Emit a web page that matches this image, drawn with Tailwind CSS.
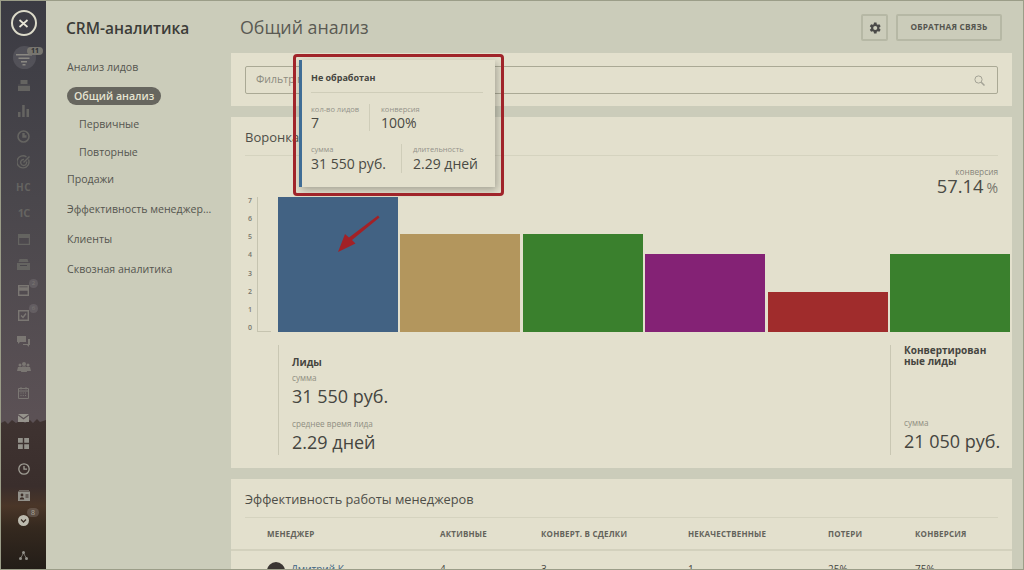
<!DOCTYPE html>
<html lang="ru">
<head>
<meta charset="utf-8">
<script src="https://cdn.jsdelivr.net/npm/@tailwindcss/browser@4"></script>
<title>CRM-аналитика</title>
</head>
<body class="m-0 overflow-hidden">
<div class="relative flex h-[570px] w-[1024px] overflow-hidden border border-[#9b9d88] bg-[#cbccba] font-['Open_Sans','Noto_Sans',sans-serif] text-[#454540]">

  <!-- icon rail -->
  <aside class="relative flex h-full w-[45px] shrink-0 flex-col items-center overflow-hidden bg-[linear-gradient(180deg,#3b3b43_0%,#4a474c_35%,#5b5155_73%,#5d4f51_100%)]">
    <svg class="absolute bottom-0 left-0" width="45" height="152" viewBox="0 0 45 152" preserveAspectRatio="none">
      <defs><linearGradient id="g" x1="0" y1="0" x2="0" y2="1"><stop offset="0" stop-color="#3f3331"/><stop offset=".45" stop-color="#3a2e2c"/><stop offset=".58" stop-color="#4a3628"/><stop offset=".72" stop-color="#35291f"/><stop offset="1" stop-color="#231d18"/></linearGradient></defs>
      <path d="M0 6l4-2 3 3 4-4 4 3 5-3 4 3 5-3 3 3 4-4 3 3 6-2V152H0z" fill="url(#g)"/>
    </svg>
    <div class="relative mt-[9px] flex h-[26px] w-[26px] items-center justify-center rounded-full border-2 border-[#dcdac9]">
      <svg width="11" height="11" viewBox="0 0 11 11" fill="none" stroke="#e8e6d6" stroke-width="1.7"><path d="M1.5 2l8 7M9.5 2l-8 7"/></svg>
    </div>
    <div class="relative mt-[11.2px] flex w-full flex-col items-center text-[#656461]">
      <div class="relative flex h-[25.6px] w-full items-center justify-center">
        <span class="absolute left-[12px] top-[-1px] h-[23px] w-[23px] rounded-full bg-white/10"></span>
        <svg class="relative" width="16" height="12" viewBox="0 0 16 12" fill="#8a8882"><path d="M0 0h16v1.600H0zM2.500 3.500h11v1.600h-11zM5 7h6v1.600H5zM6.500 10h3v1.600h-3z"/></svg>
        <span class="absolute left-[26px] top-[0px] rounded-full bg-[#77756f] px-[4px] text-[7px] font-bold leading-[8px] text-[#2f2f33]">11</span>
      </div>
      <div class="flex h-[25.6px] items-center"><svg width="12" height="11" viewBox="0 0 12 11" fill="currentColor"><path d="M2.500 0h7v4h-7zM0 6h12v5H0z"/><path d="M0 4.800h12v.5H0z"/></svg></div>
      <div class="flex h-[25.6px] items-center"><svg width="11" height="12" viewBox="0 0 11 12" fill="currentColor"><path d="M0 7h2.500v5H0zM4.200 0h2.500v12H4.200zM8.500 4H11v8H8.500z"/></svg></div>
      <div class="flex h-[25.6px] items-center"><svg width="13" height="13" viewBox="0 0 13 13" fill="none" stroke="currentColor" stroke-width="1.600"><circle cx="6.500" cy="6.500" r="5.500"/><path d="M6.500 3v3.500H9.500" stroke-width="2.400"/></svg></div>
      <div class="flex h-[25.6px] items-center"><svg width="14" height="14" viewBox="0 0 14 14" fill="none" stroke="currentColor" stroke-width="1.400"><path d="M11.500 4.500a6 6 0 1 1-2-2.500"/><path d="M9.500 6.500a3 3 0 1 1-2.500-2"/><path d="M6.500 7.500l6-6"/></svg></div>
      <div class="flex h-[25.6px] items-center text-[10px] font-bold tracking-[.5px]">НС</div>
      <div class="flex h-[25.6px] items-center text-[11px] font-bold tracking-[-1px]">1С</div>
      <div class="flex h-[25.6px] items-center"><svg width="12" height="11" viewBox="0 0 12 11" fill="none" stroke="currentColor" stroke-width="1.200"><path d="M.6.600h10.800v9.800H.6z"/><path d="M0 1h12v2.500H0z" fill="currentColor"/></svg></div>
      <div class="flex h-[25.6px] items-center"><svg width="13" height="11" viewBox="0 0 13 11" fill="currentColor"><path d="M2.500 0h8l1 3h-10zM0 4h13v7H0z"/><path d="M3 6h7v1H3z" fill="#4a474c"/></svg></div>
      <div class="relative flex h-[25.6px] w-full items-center justify-center text-[#7b7773]"><svg width="11" height="11" viewBox="0 0 11 11" fill="none" stroke="currentColor" stroke-width="1.400"><path d="M.7.700h9.600v9.600H.7z"/><path d="M1 3h9v2H1z" fill="currentColor"/></svg><span class="absolute left-[28px] top-[1px] h-[9px] w-[9px] rounded-full bg-white/10 text-center text-[6px] leading-[9px]">2</span></div>
      <div class="relative flex h-[25.6px] w-full items-center justify-center text-[#7b7773]"><svg width="11" height="11" viewBox="0 0 11 11" fill="none" stroke="currentColor" stroke-width="1.400"><path d="M.7.700h9.600v9.600H.7z"/><path d="M3 5.500l2 2 3-4"/></svg><span class="absolute left-[28px] top-[1px] h-[9px] w-[9px] rounded-full bg-white/10 text-center text-[6px] leading-[9px]">6</span></div>
      <div class="flex h-[25.6px] items-center text-[#7b7773]"><svg width="13" height="11" viewBox="0 0 13 11" fill="currentColor"><path d="M0 0h9v6H3L1 8V6H0z"/><path d="M11 3h2v6h-1v2l-2-2H6V8h5z"/></svg></div>
      <div class="flex h-[25.6px] items-center text-[#7b7773]"><svg width="14" height="11" viewBox="0 0 14 11" fill="currentColor"><circle cx="3" cy="3" r="1.500"/><circle cx="7" cy="2" r="2"/><circle cx="11" cy="3" r="1.500"/><path d="M0 9l1-4h4l1 4zM4 10l1-5.500h4L10 10zM8 9l1-4h4l1 4z"/></svg></div>
      <div class="flex h-[25.6px] items-center text-[#7b7773]"><svg width="11" height="12" viewBox="0 0 11 12" fill="none" stroke="currentColor" stroke-width="1"><path d="M.5 1.500h10v10H.5zM.5 4h10M3 0v2.500M8 0v2.500"/><path d="M2.500 6h6M2.500 8.500h6" stroke-dasharray="1 1.250"/></svg></div>
      <div class="flex h-[25.6px] items-center text-[#96938c]"><svg width="11" height="8" viewBox="0 0 11 8" fill="currentColor"><path d="M0 0h11L5.500 4zM0 1.500l5.500 4 5.500-4V8H0z"/></svg></div>
      <div class="flex h-[25.6px] items-center text-[#93918a]"><svg width="11" height="11" viewBox="0 0 11 11" fill="currentColor"><path d="M0 0h4.800v4.800H0zM6.200 0H11v4.800H6.200zM0 6.200h4.800V11H0zM6.200 6.200H11V11H6.200z"/></svg></div>
      <div class="flex h-[25.6px] items-center text-[#a09e95]"><svg width="12" height="12" viewBox="0 0 12 12" fill="none" stroke="currentColor" stroke-width="1.300"><circle cx="6" cy="6" r="5.200"/><path d="M6 3v3.200h3"/></svg></div>
      <div class="flex h-[25.6px] items-center text-[#93918a]"><svg width="12" height="11" viewBox="0 0 12 11" fill="currentColor"><path d="M0 1.500h12V11H0z"/><path d="M1 0h10v.6H1z"/><circle cx="4" cy="5" r="1.400" fill="#3c2e28"/><path d="M1.800 9.500c0-3 4.400-3 4.400 0zM7.500 4.500H10.500v1H7.500zM7.500 6.500H10.500v1H7.500z" fill="#3c2e28"/></svg></div>
      <div class="relative flex h-[25.6px] w-full items-center justify-center"><svg width="11" height="11" viewBox="0 0 11 11"><circle cx="5.500" cy="5.500" r="5.500" fill="#bdbbaf"/><path d="M3 4.500l2.500 2.500L8 4.500" fill="none" stroke="#3a2e26" stroke-width="1.300"/></svg><span class="absolute left-[26px] top-[0px] h-[9px] w-[12px] rounded-full bg-white/15 text-center text-[7px] leading-[9px] text-[#aaa89e]">8</span></div>
    </div>
    <svg class="absolute bottom-[9px] left-[18px] text-[#93918a]" width="9" height="9" viewBox="0 0 9 9" fill="currentColor"><circle cx="4.500" cy="1.500" r="1.500"/><circle cx="1.500" cy="7.500" r="1.500"/><circle cx="7.500" cy="7.500" r="1.500"/><path d="M4.200 2L1.300 7l.6.300L4.800 2.300zM4.800 2l2.900 5-.6.300L4.200 2.300z"/></svg>
  </aside>

  <!-- section nav -->
  <nav class="w-[185px] shrink-0 pl-[20px] pr-2 text-[10.6px] text-[#55554f]">
    <h2 class="mt-[15px] h-[24px] text-[15.5px] font-semibold leading-[24px] text-[#3c3c38]">CRM-аналитика</h2>
    <ul class="mt-[17px] flex flex-col pl-[1px]">
      <li class="h-[30px] leading-[20px]">Анализ лидов</li>
      <li class="h-[28px]"><span class="inline-block h-[18px] rounded-full bg-[#67665f] px-[7px] font-semibold leading-[18px] text-[#e6e4d2]">Общий анализ</span></li>
      <li class="h-[28px] pl-[12px] leading-[18px]">Первичные</li>
      <li class="h-[27px] pl-[12px] leading-[18px]">Повторные</li>
      <li class="h-[30px] leading-[18px]">Продажи</li>
      <li class="h-[30px] w-[147px] truncate leading-[18px]">Эффективность менеджеров</li>
      <li class="h-[30px] leading-[18px]">Клиенты</li>
      <li class="h-[30px] leading-[18px]">Сквозная аналитика</li>
    </ul>
  </nav>

  <!-- main -->
  <main class="flex min-w-0 flex-1 flex-col pr-[11px]">
    <header class="flex h-[52px] items-start justify-between pl-[9px] pr-[10px]">
      <h1 class="mt-[13px] text-[17.8px] leading-[26px] text-[#5a5a53]">Общий анализ</h1>
      <div class="mt-[13px] flex gap-[8px]">
        <button class="flex h-[27px] w-[27px] items-center justify-center rounded-[2px] border-2 border-[#b6b8a5]">
          <svg width="14" height="14" viewBox="0 0 24 24" fill="#4a4a48"><path d="M19.400 13a7.500 7.500 0 0 0 0-2l2.300-1.800-2.200-3.800-2.700 1.100a7.500 7.500 0 0 0-1.800-1L14.600 2.600h-4.400L9.800 5.500a7.500 7.500 0 0 0-1.800 1L5.300 5.400 3.100 9.200 5.400 11a7.500 7.500 0 0 0 0 2l-2.300 1.800 2.200 3.800 2.700-1.100a7.500 7.500 0 0 0 1.800 1l.4 2.900h4.400l.4-2.900a7.500 7.500 0 0 0 1.800-1l2.700 1.100 2.200-3.800zM12.400 15.500a3.500 3.500 0 1 1 0-7 3.500 3.500 0 0 1 0 7z"/></svg>
        </button>
        <button class="h-[27px] w-[106px] rounded-[2px] border-2 border-[#b6b8a5] text-[8.3px] font-bold tracking-[.2px] text-[#55554f]">ОБРАТНАЯ СВЯЗЬ</button>
      </div>
    </header>

    <section class="h-[53px] shrink-0 bg-[#e3e0cd] px-[14px] pt-[13px]">
      <div class="flex h-[28px] items-center justify-between rounded-[2px] border border-[#aaa995] pl-[10px] pr-[12px] text-[10.5px] text-[#8c8b7f]">
        <span>Фильтр по</span>
        <svg width="11" height="11" viewBox="0 0 11 11" fill="none" stroke="#a3a295" stroke-width="1"><circle cx="4.500" cy="4.500" r="3.600"/><path d="M7.200 7.200l3.300 3.300" stroke-width="1.500"/></svg>
      </div>
    </section>

    <section class="mt-[11px] h-[351px] shrink-0 bg-[#e3e0cd] px-[14px]">
      <div class="h-[39px] border-b border-[#d5d3bf] pt-[10px] text-[13px] leading-[20px] text-[#4e4e48]">Воронка</div>
      <div class="h-[41px] pt-[11px] text-right leading-none">
        <div class="text-[8.3px] leading-[10px] text-[#86857a]">конверсия</div>
        <div class="-mt-[1px] text-[18.3px] leading-[20px] text-[#4a4a44]">57.14<span class="ml-[3px] text-[14px] text-[#77766c]">%</span></div>
      </div>
      <!-- chart -->
      <div class="-mr-[12px] flex h-[135px]">
        <div class="flex h-full w-[12px] flex-col justify-between pl-[3px] text-[7px] font-semibold leading-[8px] text-[#77766c]">
          <span>7</span><span>6</span><span>5</span><span>4</span><span>3</span><span>2</span><span>1</span><span>0</span>
        </div>
        <div class="h-full w-[14px] shrink-0 border-b border-l border-[#c6c4b0]"></div>
        <div class="ml-[7px] flex h-[135px] flex-1 items-end gap-[2.6px]">
          <div class="h-[135px] flex-1 bg-[#426283]"></div>
          <div class="h-[98px] flex-1 bg-[#b3965d]"></div>
          <div class="h-[98px] flex-1 bg-[#3a802d]"></div>
          <div class="h-[78px] flex-1 bg-[#842275]"></div>
          <div class="h-[40px] flex-1 bg-[#a02c2c]"></div>
          <div class="h-[78px] flex-1 bg-[#3a802d]"></div>
        </div>
      </div>
      <!-- totals -->
      <div class="mt-[13px] flex h-[110px] justify-between pl-[33px]">
        <div class="w-[200px] border-l border-[#c9c7b3] pl-[13px] pt-[10px]">
          <div class="text-[10px] font-bold leading-[14px] text-[#45453f]">Лиды</div>
          <div class="mt-[3px] text-[8.2px] leading-[12px] text-[#8f8e82]">сумма</div>
          <div class="text-[18px] leading-[24px] text-[#45453f]">31 550 руб.</div>
          <div class="mt-[10px] text-[8.2px] leading-[12px] text-[#8f8e82]">среднее время лида</div>
          <div class="text-[18px] leading-[24px] text-[#45453f]">2.29 дней</div>
        </div>
        <div class="w-[108px] border-l border-[#c9c7b3] pl-[13px] pt-0">
          <div class="whitespace-nowrap text-[10px] font-bold leading-[11px] text-[#45453f]">Конвертирован<br>ные лиды</div>
          <div class="mt-[50px] text-[8.2px] leading-[12px] text-[#8f8e82]">сумма</div>
          <div class="whitespace-nowrap text-[18px] leading-[24px] text-[#45453f]">21 050 руб.</div>
        </div>
      </div>
    </section>

    <section class="mt-[11px] flex-1 overflow-hidden bg-[#e3e0cd]">
      <div class="mx-[14px] h-[39px] border-b border-[#d5d3bf] pt-[10px] text-[12.8px] leading-[20px] text-[#4e4e48]">Эффективность работы менеджеров</div>
      <div class="grid h-[33px] grid-cols-[173px_101px_147px_140px_87px_1fr] items-center border-b-[2px] border-[#d3d1bd] pl-[36px] text-[8px] font-bold tracking-[.2px] text-[#64635b]">
        <span>МЕНЕДЖЕР</span><span>АКТИВНЫЕ</span><span>КОНВЕРТ. В СДЕЛКИ</span><span>НЕКАЧЕСТВЕННЫЕ</span><span>ПОТЕРИ</span><span>КОНВЕРСИЯ</span>
      </div>
      <div class="grid grid-cols-[173px_101px_147px_140px_87px_1fr] items-start pl-[36px] pt-[11px] text-[10px] leading-[14px] text-[#45453f]">
        <span class="flex items-start gap-[6px]"><span class="h-[18px] w-[18px] rounded-full bg-[#3b3633]"></span><span class="text-[#3f6584]">Дмитрий К</span></span><span>4</span><span>3</span><span>1</span><span>25%</span><span>75%</span>
      </div>
    </section>
  </main>

  <!-- tooltip -->
  <div class="absolute left-[298px] top-[59px] h-[127px] w-[196px] border-l-[3px] border-[#3f6d96] bg-[#e3e0cd] pl-[9px] pr-[12px] shadow-[2px_3px_8px_rgba(0,0,0,0.28)]">
    <div class="h-[33px] border-b border-[#cfcdb9] pt-[11px] text-[9px] font-bold leading-[14px] text-[#45453f]">Не обработан</div>
    <div class="mt-[11px] flex h-[27px]">
      <div class="w-[59px] border-r border-[#cfcdb9]">
        <div class="text-[7.5px] leading-[10px] text-[#93928a]">кол-во лидов</div>
        <div class="text-[14px] leading-[18px] text-[#4a4a44]">7</div>
      </div>
      <div class="pl-[11px]">
        <div class="text-[7.5px] leading-[10px] text-[#93928a]">конверсия</div>
        <div class="text-[14px] leading-[18px] text-[#4a4a44]">100%</div>
      </div>
    </div>
    <div class="mt-[13px] flex h-[29px]">
      <div class="w-[91px] border-r border-[#cfcdb9]">
        <div class="text-[7.5px] leading-[10px] text-[#93928a]">сумма</div>
        <div class="whitespace-nowrap text-[14px] leading-[20px] text-[#4a4a44]">31 550 руб.</div>
      </div>
      <div class="pl-[11px]">
        <div class="text-[7.5px] leading-[10px] text-[#93928a]">длительность</div>
        <div class="whitespace-nowrap text-[14px] leading-[20px] text-[#4a4a44]">2.29 дней</div>
      </div>
    </div>
  </div>

  <!-- annotation -->
  <div class="pointer-events-none absolute left-[292px] top-[53px] h-[142px] w-[211px] rounded-[4px] border-[3px] border-[#a0242a]"></div>
  <svg class="pointer-events-none absolute left-[335px] top-[213px]" width="44" height="40" viewBox="0 0 44 40" fill="#a32126"><path d="M42 1.500l1.500 2L16 26l3.500 3.500L2 38l7-18 4 3.500z"/></svg>
</div>
</body>
</html>
